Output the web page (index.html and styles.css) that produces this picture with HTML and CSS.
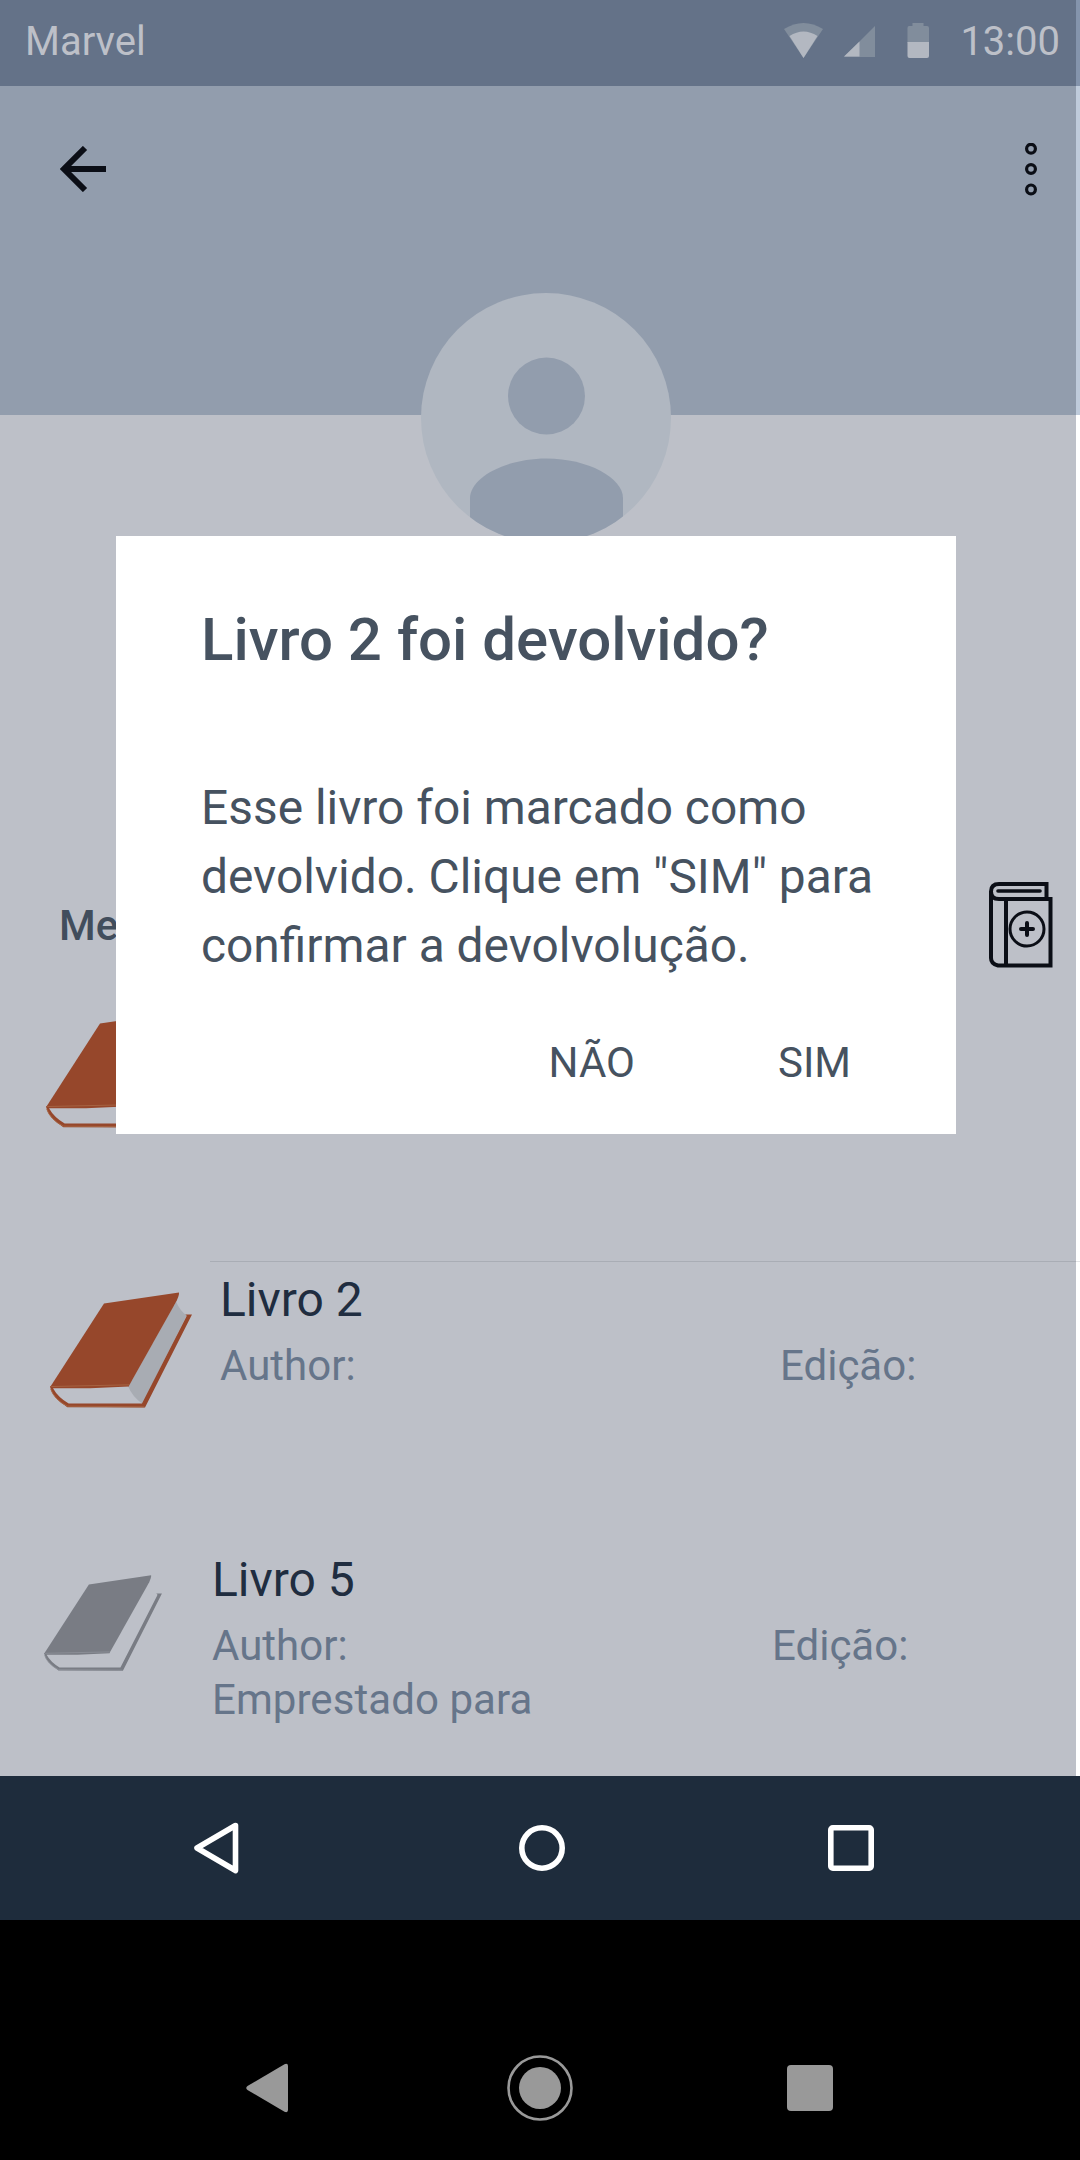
FILE: index.html
```html
<!DOCTYPE html>
<html lang="pt-BR">
<head>
<meta charset="utf-8">
<title>Marvel</title>
<link rel="stylesheet" href="styles.css">
</head>
<body>
<svg class="defs" width="0" height="0" aria-hidden="true">
  <symbol id="book" viewBox="60 156 426 347">
    <path class="pages" d="M438 184Q450 212 470 226L337 491Q306 468 295 440Z"/>
    <path class="cover" d="M222 190L447 157Q448 164 440 182L297 437L60 441Z"/>
    <path class="cover" d="M60 439Q66 472 112 501L345 502L486 223H464Q472 224 469 230L336 490H116Q84 471 69 444L180 444L297 439V434L66 437Z"/>
    <path class="edge" d="M64 439L297 434M62 446Q72 478 112 498L343 500"/>
  </symbol>
</svg>
<div class="screen">
  <div class="statusbar">
    <span class="carrier">Marvel</span>
    <svg class="wifi" width="39" height="35" viewBox="0 0 39 35"><path fill="#818d9c" d="M0 6Q19.500-6 39 6L19.500 35Z"/><path fill="#b3b8c1" d="M5.500 13Q19.500 4 33.500 13L19.500 35Z"/></svg>
    <svg class="signal" width="31" height="31" viewBox="0 0 31 31"><path fill="#818d9c" d="M31 0V31H0Z"/><path fill="#b3b8c1" d="M15.500 15.500V30.500H0Z"/></svg>
    <svg class="battery" width="22" height="35" viewBox="0 0 22 35"><path fill="#818d9c" d="M5.500 0H16.500V3H20Q22 3 22 5V20H.5V5Q.5 3 2 3H5.500Z"/><path fill="#b3b8c1" d="M.5 19H22V33Q22 35 20 35H2.500Q.5 35 .5 33Z"/></svg>
    <span class="clock">13:00</span>
  </div>
  <header class="header">
    <svg width="46" height="46" viewBox="0 0 46 46" fill="none" stroke="#0b0e16" stroke-width="6"><path d="M46 23H6M25 2L4 23L25 44"/></svg>
    <svg width="12" height="53" viewBox="0 0 12 53" fill="none" stroke="#0b0e16" stroke-width="3.200"><circle cx="6" cy="5.700" r="4.400"/><circle cx="6" cy="26" r="4.400"/><circle cx="6" cy="46.400" r="4.400"/></svg>
    <svg class="avatar" width="250" height="250" viewBox="0 0 250 250"><clipPath id="round"><circle cx="125" cy="125" r="125"/></clipPath><circle cx="125" cy="125" r="125" fill="#b0b7c1"/><g clip-path="url(#round)" fill="#929dad"><circle cx="125.500" cy="103" r="38.500"/><path d="M49 250V205C49 185 84 165.500 125.500 165.500S202 185 202 205V250Z"/></g></svg>
  </header>
  <main class="content">
    <div class="heading">
      <h2>Me</h2>
      <svg width="64" height="86" viewBox="0 0 64 86" fill="none" stroke="#0b0e16" stroke-width="4"><path d="M57.500 16V2H10Q2 2 2 9.500Q2 17 10 17H61.500V83.500H9Q2 82 2 76V9M17 17V83"/><path d="M9 9H51" stroke-width="3.600" stroke-linecap="round"/><circle cx="38" cy="47" r="17" stroke-width="3"/><path d="M38 41V53M32 47H44" stroke-linecap="round"/></svg>
    </div>
    <ul class="books">
      <li class="item first"><svg class="book" width="142" height="116"><use href="#book"/></svg></li>
      <li class="item second">
        <svg class="book" width="142" height="116"><use href="#book"/></svg>
        <div class="info"><h3>Livro 2</h3><div class="meta"><span>Author:</span><span class="edition">Edição:</span></div></div>
      </li>
      <li class="item third">
        <svg class="book lent" width="118" height="96"><use href="#book"/></svg>
        <div class="info"><h3>Livro 5</h3><div class="meta"><span>Author:</span><span class="edition">Edição:</span></div><p>Emprestado para</p></div>
      </li>
    </ul>
  </main>
  <nav class="appnav">
    <svg width="46" height="52" viewBox="0 0 46 52"><path d="M42.500 3.500L4 26L42.500 48.500Z"/></svg>
    <svg width="46" height="46" viewBox="0 0 46 46"><circle cx="23" cy="23" r="20.200"/></svg>
    <svg width="46" height="46" viewBox="0 0 46 46"><rect x="2.800" y="2.800" width="40.400" height="40.400" rx="2"/></svg>
  </nav>
  <nav class="sysnav">
    <svg width="42" height="50" viewBox="0 0 42 50"><path d="M38.500 1.200Q42 0 42 3V47Q42 50 38.500 48.800L1.500 27Q-1 25 1.500 23Z"/></svg>
    <svg width="66" height="66" viewBox="0 0 66 66"><circle cx="33" cy="33" r="21"/><circle cx="33" cy="33" r="31.500" fill="none" stroke="#999" stroke-width="2.600"/></svg>
    <svg width="46" height="46" viewBox="0 0 46 46"><rect width="46" height="46" rx="4"/></svg>
  </nav>
  <section class="dialog" role="dialog">
    <h1>Livro 2 foi devolvido?</h1>
    <p>Esse livro foi marcado como<br>devolvido. Clique em "SIM" para<br>confirmar a devolvolução.</p>
    <div class="actions"><button>NÃO</button><button>SIM</button></div>
  </section>
</div>
</body>
</html>
```

FILE: styles.css
```css
* { box-sizing: border-box; margin: 0; padding: 0; }
body { width: 1080px; font-family: Roboto, sans-serif; background: #000; }
svg { display: block; flex: none; }
.defs { position: absolute; }
.screen { position: relative; display: flex; flex-direction: column; width: 1080px; height: 2160px; overflow: hidden; }

.statusbar { display: flex; align-items: flex-start; height: 86px; padding: 18px 0 0 25px; background: #647288; border-right: 4px solid #8494ac; color: #bdc0c8; font-size: 40px; line-height: 48px; }
.carrier { flex: 1; }
.wifi { margin-top: 5px; }
.signal { margin: 8px 0 0 21px; }
.battery { margin: 5px 0 0 32px; }
.clock { margin: 0 16px 0 31px; }

.header { position: relative; display: flex; justify-content: space-between; height: 329px; padding: 60px 39px 0 60px; background: #929dad; border-right: 4px solid #bfcbdb; }
.header > svg:nth-child(2) { margin-top: -3px; }
.avatar { position: absolute; left: 421px; top: 207px; }

.content { height: 1361px; padding-top: 467px; background: #bdc0c8; border-right: 4px solid #fff; }
.heading { display: flex; justify-content: space-between; height: 100px; padding: 0 23px 0 59px; }
.heading h2 { padding-top: 19px; font-size: 42px; line-height: 50px; font-weight: 500; color: #414d5c; }
.books { list-style: none; }
.item { display: flex; height: 280px; }
.first { height: 279px; padding: 30px 0 0 46px; }
.second { margin-right: -4px; padding: 31px 0 0 50px; background: linear-gradient(90deg, #a9adb5 866px, #e3e4e6 866px) 210px 0 / 870px 1px no-repeat; }
.third { height: 235px; padding: 34px 0 0 44px; }
.info { color: #66758a; font-size: 42px; line-height: 54px; }
.second .info { margin: -20px 0 0 28px; }
.third .info { margin: -23px 0 0 50px; }
.info h3 { font-size: 48px; line-height: 56px; font-weight: 400; color: #202d40; margin-bottom: 11px; }
.info p { letter-spacing: 0.06px; }
.meta { display: flex; }
.meta span:first-child { width: 560px; }

.book { --cover: #96472b; --pages: #a8acb3; --edge: #a66342; }
.lent { --cover: #797c84; --pages: #bdc0c8; --edge: #8e9199; }
.cover { fill: var(--cover); }
.pages { fill: var(--pages); }
.edge { fill: none; stroke: var(--edge); stroke-width: 3; }

.appnav { display: flex; align-items: center; height: 144px; padding-left: 193px; background: #1e2c3c; fill: none; stroke: #fff; stroke-width: 5.6; stroke-linejoin: round; }
.appnav svg:nth-child(2) { margin-left: 280px; }
.appnav svg:nth-child(3) { margin-left: 263px; }
.sysnav { display: flex; align-items: center; height: 240px; padding: 96px 0 0 246px; background: #000; fill: #999; }
.sysnav svg:nth-child(2) { margin-left: 219px; }
.sysnav svg:nth-child(3) { margin-left: 214px; }

.dialog { position: absolute; left: 116px; top: 536px; width: 840px; height: 598px; padding: 69px 80px 0 85px; background: #fff; color: #465260; }
.dialog h1 { font-size: 60px; line-height: 70px; font-weight: 500; }
.dialog p { margin-top: 99px; font-size: 47.88px; line-height: 69px; white-space: nowrap; }
.actions { display: flex; justify-content: flex-end; gap: 143px; margin: 57px 25px 0 0; }
.actions button { border: 0; background: none; color: inherit; font: 42px/50px Roboto, sans-serif; }
```
